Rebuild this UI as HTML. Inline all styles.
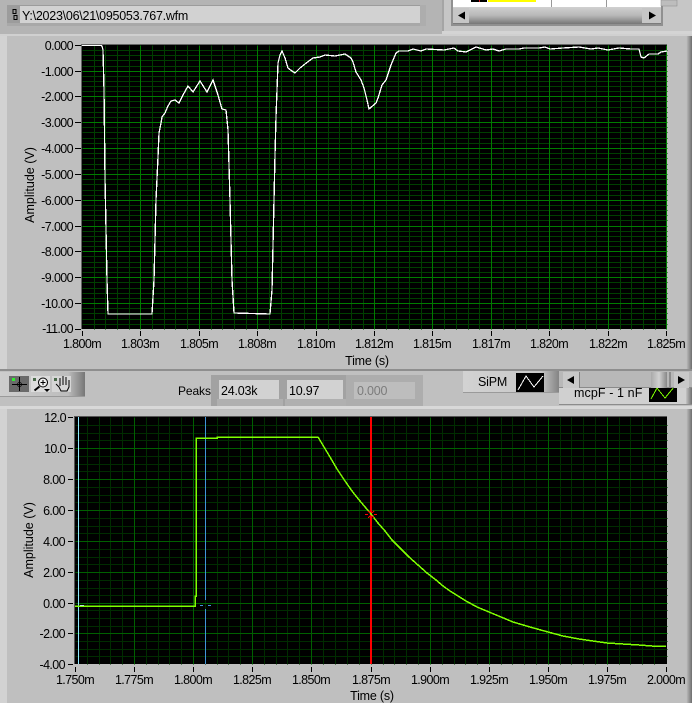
<!DOCTYPE html>
<html><head><meta charset="utf-8">
<style>
html,body{margin:0;padding:0;width:692px;height:703px;overflow:hidden;background:#bfbfbf}
svg{display:block;position:absolute;left:0;top:0}
text{font-family:"Liberation Sans",sans-serif;font-size:12.5px;letter-spacing:-.6px;fill:#000}
.r{text-anchor:end}.c{text-anchor:middle}
.ln{fill:none;shape-rendering:crispEdges}
</style></head><body>
<svg width="692" height="703" viewBox="0 0 692 703" xmlns="http://www.w3.org/2000/svg">
<defs>
<linearGradient id="gr" x1="0" x2="1" y1="0" y2="0"><stop offset="0" stop-color="#c4c4c4"/><stop offset="1" stop-color="#6e6e6e"/></linearGradient>
<linearGradient id="tb" x1="0" x2="1" y1="0" y2="0"><stop offset="0" stop-color="#cdcdcd"/><stop offset=".8" stop-color="#bdbdbd"/><stop offset="1" stop-color="#777"/></linearGradient>
<linearGradient id="sp" x1="0" x2="1" y1="0" y2="0"><stop offset="0" stop-color="#d2d2d2"/><stop offset=".8" stop-color="#c8c8c8"/><stop offset="1" stop-color="#808080"/></linearGradient>
<linearGradient id="th" x1="0" x2="0" y1="0" y2="1"><stop offset="0" stop-color="#d0d0d0"/><stop offset=".5" stop-color="#b8b8b8"/><stop offset="1" stop-color="#777"/></linearGradient>
<linearGradient id="th2" x1="0" x2="1" y1="0" y2="0"><stop offset="0" stop-color="#aaa"/><stop offset=".5" stop-color="#d0d0d0"/><stop offset="1" stop-color="#888"/></linearGradient>
</defs>

<!-- panel backgrounds -->
<rect width="692" height="703" fill="#bfbfbf"/>
<rect x="0" y="36" width="7" height="334" fill="#d2d2d2"/>
<rect x="0" y="409" width="7" height="294" fill="#d2d2d2"/>
<rect x="686" y="36" width="6" height="334" fill="url(#gr)"/>
<rect x="686" y="409" width="6" height="294" fill="url(#gr)"/>

<!-- top strip -->
<rect x="0" y="0" width="692" height="35" fill="#b4b4b4"/>
<rect x="0" y="34" width="692" height="2" fill="#d0d0d0"/>
<rect x="7" y="5" width="419" height="21" fill="#9c9c9c"/>
<rect x="20" y="6" width="400" height="17" fill="#d2d2d2"/>
<rect x="7" y="23" width="419" height="3" fill="#a8a8a8"/>
<rect x="420" y="5" width="6" height="21" fill="#adadad"/>
<rect x="13" y="9.500" width="3" height="4" fill="none" stroke="#000"/>
<rect x="14" y="15.500" width="3" height="4" fill="none" stroke="#000"/>
<text x="22" y="20" style="font-size:12.5px;letter-spacing:-.25px">Y:\2023\06\21\095053.767.wfm</text>

<!-- table at top right -->
<rect x="442" y="0" width="250" height="34" fill="#c6c6c6"/>
<rect x="442" y="0" width="2" height="34" fill="#a5a5a5"/>
<rect x="442" y="31" width="250" height="3" fill="#d4d4d4"/>
<rect x="451" y="0" width="212" height="26" fill="#909090"/>
<rect x="453" y="0" width="208" height="7" fill="#fff"/>
<rect x="471" y="0" width="16" height="2" fill="#000"/>
<rect x="479" y="0" width="1" height="2" fill="#d02020"/>
<rect x="488" y="0" width="48" height="2" fill="#ffff00"/>
<rect x="551" y="0" width="1" height="7" fill="#999"/>
<rect x="606" y="0" width="1" height="7" fill="#999"/>
<rect x="661" y="0" width="16" height="6" fill="#bdbdbd" stroke="#888" stroke-width=".5"/>
<rect x="453" y="7" width="208" height="17" fill="url(#th)"/>
<rect x="453" y="8" width="16" height="15" fill="#c6c6c6"/>
<rect x="642" y="8" width="19" height="15" fill="#c6c6c6"/>
<path d="M458 15.500l7-4v8z" fill="#000"/><path d="M656 15.500l-7-4v8z" fill="#000"/>

<!-- top plot -->
<rect x="81" y="44" width="586" height="285" fill="#000"/>
<path d="M81 44.500H667M81.500 44V329" stroke="#666" class="ln"/>
<g transform="translate(.5,.5)" class="ln">
<path stroke="#003f00" d="M94 45v284M105 45v284M117 45v284M129 45v284M152 45v284M164 45v284M175 45v284M187 45v284M211 45v284M222 45v284M234 45v284M246 45v284M269 45v284M281 45v284M293 45v284M304 45v284M328 45v284M339 45v284M351 45v284M363 45v284M386 45v284M398 45v284M409 45v284M421 45v284M444 45v284M456 45v284M468 45v284M479 45v284M503 45v284M515 45v284M526 45v284M538 45v284M561 45v284M573 45v284M585 45v284M596 45v284M620 45v284M631 45v284M643 45v284M655 45v284
M82 50h585M82 55h585M82 60h585M82 66h585M82 76h585M82 81h585M82 86h585M82 91h585M82 101h585M82 107h585M82 112h585M82 117h585M82 127h585M82 132h585M82 138h585M82 143h585M82 153h585M82 158h585M82 164h585M82 169h585M82 179h585M82 184h585M82 190h585M82 195h585M82 205h585M82 210h585M82 215h585M82 220h585M82 231h585M82 236h585M82 241h585M82 246h585M82 256h585M82 262h585M82 267h585M82 272h585M82 282h585M82 288h585M82 293h585M82 298h585M82 308h585M82 313h585M82 319h585M82 324h585"/>
<path stroke="#007c00" d="M140 45v284M199 45v284M257 45v284M316 45v284M374 45v284M432 45v284M491 45v284M549 45v284M608 45v284M666 45v284M82 71h585M82 96h585M82 122h585M82 148h585M82 174h585M82 200h585M82 226h585M82 251h585M82 277h585M82 303h585"/>
</g>
<polyline class="ln" stroke="#fff" stroke-width="1.3" points="82,45.500 101,45.500 102,46 103,50 104,90 105,178 107,280 108,314 152,314 154,280 156,200 158,157 159,133 161,123 162,117 165,113 168,106 171,101 175,100 179,103 183,95 188,86 193,92 200,81 207,92 213,80 218,95 222,109 226,110 228,130 229,165 230,200 232,280 234,313 270,314 272,290 274,200 275,155 276,117 277,90 278,63 280,55 282,51 285,58 288,68 292,71 295,73 300,68 305,64 313,58 320,57 325,55 335,56 345,54 351,58 353,62 356,72 361,80 364,88 367,100 369,109 376,103 378,98 382,85 386,80 391,65 396,53 399,51 408,51 413,49 421,51 426,49 444,50 454,48 458,51 466,52 476,47 486,50 493,49 499,51 506,49 519,49 524,48 539,48 545,47 550,49 563,48 579,47 591,49 598,48 608,50 619,48 631,49 639,49 641,57 644,58 649,54 658,54 661,52 667,51"/>

<!-- top plot ticks & labels -->
<path class="ln" stroke="#000" d="M75 45.500h6M75 71.500h6M75 96.500h6M75 122.500h6M75 148.500h6M75 174.500h6M75 200.500h6M75 226.500h6M75 251.500h6M75 277.500h6M75 303.500h6M75 329.500h6M82.500 331v5M140.500 331v5M199.500 331v5M257.500 331v5M316.500 331v5M374.500 331v5M432.500 331v5M491.500 331v5M549.500 331v5M608.500 331v5M666.500 331v5"/>
<g class="r">
<text x="73" y="50">0.000</text><text x="73" y="76">-1.000</text><text x="73" y="101">-2.000</text><text x="73" y="127">-3.000</text><text x="73" y="153">-4.000</text><text x="73" y="179">-5.000</text><text x="73" y="205">-6.000</text><text x="73" y="231">-7.000</text><text x="73" y="256">-8.000</text><text x="73" y="282">-9.000</text><text x="73" y="308">-10.00</text><text x="73" y="333">-11.00</text>
</g>
<g class="c">
<text x="82" y="348">1.800m</text><text x="140" y="348">1.803m</text><text x="199" y="348">1.805m</text><text x="257" y="348">1.808m</text><text x="316" y="348">1.810m</text><text x="374" y="348">1.812m</text><text x="432" y="348">1.815m</text><text x="491" y="348">1.817m</text><text x="549" y="348">1.820m</text><text x="608" y="348">1.822m</text><text x="666" y="348">1.825m</text>
<text x="367" y="365" style="letter-spacing:-.2px">Time (s)</text>
<text transform="translate(34,185) rotate(-90)" style="letter-spacing:0">Amplitude (V)</text>
</g>

<!-- middle bar -->
<rect x="0" y="369" width="692" height="2" fill="#8e8e8e"/>
<rect x="0" y="371" width="692" height="35" fill="#c0c0c0"/>
<rect x="0" y="406" width="692" height="3" fill="#d8d8d8"/>
<rect x="0" y="372" width="85" height="24" fill="url(#tb)"/>
<rect x="0" y="396" width="85" height="1" fill="#9a9a9a"/>
<!-- tool buttons -->
<rect x="9" y="376" width="20" height="16" fill="#6a6a6a"/>
<path class="ln" stroke="#000" d="M12 384.500h15M19.500 377v14"/>
<rect x="12" y="378" width="3" height="3" fill="#30f030"/>
<circle cx="19.500" cy="384.500" r="2" fill="none" stroke="#000" stroke-width=".8"/>
<rect x="31" y="376" width="19" height="16" fill="#dcdcdc"/>
<rect x="33" y="378" width="3" height="3" fill="#4a6a4a"/>
<circle cx="43" cy="382.500" r="4.500" fill="#f0f0f0" stroke="#000"/>
<path d="M40.500 382.500h5M43 380v5" stroke="#000" stroke-width="1"/>
<path d="M39.500 386.500l-5 4" stroke="#000" stroke-width="2"/>
<path d="M44 389h6l-3 3z" fill="#000"/>
<rect x="52" y="376" width="19" height="16" fill="#d6d6d6"/>
<rect x="54" y="378" width="3" height="3" fill="#4a6a4a"/>
<path fill="none" stroke="#000" stroke-width="1" d="M56 384l3 3 2 4h6l2-4v-7M60 386v-8M63 385v-9M66 385v-8M69 385v-5"/>

<text x="178" y="395" style="letter-spacing:-.1px;font-size:12px">Peaks</text>
<rect x="211" y="375" width="74" height="31" fill="#a2a2a2"/>
<rect x="284" y="375" width="68" height="31" fill="#a2a2a2"/>
<rect x="217" y="399" width="66" height="7" fill="#b0b0b0"/>
<rect x="285" y="399" width="65" height="7" fill="#b0b0b0"/>
<rect x="219" y="380" width="60" height="19" fill="#d2d2d2"/>
<rect x="287" y="380" width="56" height="19" fill="#d2d2d2"/>
<text x="221" y="395" style="letter-spacing:-.2px">24.03k</text>
<text x="289" y="395" style="letter-spacing:-.2px">10.97</text>
<rect x="346" y="375" width="77" height="31" fill="#adadad"/>
<rect x="354" y="382" width="61" height="17" fill="#bdbdbd"/>
<text x="357" y="395" style="fill:#7c7c7c;letter-spacing:-.2px">0.000</text>

<!-- SiPM legend -->
<rect x="463" y="371" width="97" height="22" fill="url(#sp)"/>
<rect x="463" y="392" width="97" height="1" fill="#9a9a9a"/>
<text x="478" y="386" style="letter-spacing:-.2px">SiPM</text>
<rect x="516" y="373" width="28" height="19" fill="#000"/>
<polyline points="518,390 526,376 534,387 543,376" fill="none" stroke="#fff" class="ln"/>

<!-- mcpF row -->
<rect x="559" y="388" width="133" height="17" fill="#d0d0d0"/>
<rect x="686" y="388" width="6" height="17" fill="url(#gr)"/>
<rect x="559" y="404" width="133" height="1" fill="#8c8c8c"/>
<text x="574" y="397" style="letter-spacing:.1px">mcpF - 1 nF</text>
<rect x="649" y="387" width="28" height="15" fill="#000"/>
<polyline points="651,399 657,388 665,398 674,387" fill="none" stroke="#7fff00" class="ln"/>

<!-- legend scrollbar -->
<rect x="559" y="371" width="133" height="17" fill="#b8b8b8"/>
<rect x="559" y="387" width="133" height="1" fill="#8a8a8a"/>
<rect x="563" y="372" width="16" height="16" fill="#c8c8c8"/>
<rect x="674" y="372" width="15" height="16" fill="#c8c8c8"/>
<rect x="579" y="372" width="1" height="16" fill="#808080"/>
<path d="M567 380l7-4v8z" fill="#000"/><path d="M685 380l-7-4v8z" fill="#000"/>
<rect x="651" y="372" width="16" height="16" fill="url(#th2)"/>
<rect x="669" y="372" width="2" height="16" fill="#8c8c8c"/>

<!-- bottom plot -->
<rect x="74" y="416" width="593" height="248" fill="#000"/>
<path d="M74 416.500H667M74.500 416V664" stroke="#555" class="ln"/>
<g transform="translate(.5,.5)" class="ln">
<path stroke="#002c00" d="M87 417v247M99 417v247M110 417v247M122 417v247M146 417v247M158 417v247M169 417v247M181 417v247M205 417v247M217 417v247M228 417v247M240 417v247M264 417v247M276 417v247M287 417v247M299 417v247M323 417v247M335 417v247M347 417v247M359 417v247M383 417v247M394 417v247M406 417v247M418 417v247M442 417v247M454 417v247M465 417v247M477 417v247M501 417v247M512 417v247M524 417v247M536 417v247M560 417v247M571 417v247M583 417v247M595 417v247M619 417v247M630 417v247M642 417v247M654 417v247
M75 425h592M75 433h592M75 440h592M75 456h592M75 464h592M75 471h592M75 487h592M75 495h592M75 502h592M75 518h592M75 526h592M75 533h592M75 549h592M75 557h592M75 564h592M75 580h592M75 588h592M75 595h592M75 610h592M75 618h592M75 626h592M75 641h592M75 649h592M75 656h592"/>
<path stroke="#006000" d="M134 417v247M193 417v247M252 417v247M311 417v247M371 417v247M430 417v247M489 417v247M548 417v247M607 417v247M75 448h592M75 479h592M75 510h592M75 541h592M75 572h592M75 603h592M75 633h592"/>
</g>
<!-- cursors -->
<rect x="78" y="417" width="1" height="247" fill="#90e8ff"/>
<path class="ln" stroke="#3f94d8" d="M205.500 417V600M205.500 609V664M200 605.500h3M208 605.500h3"/>
<rect x="370" y="417" width="2" height="247" fill="#ff0000"/>
<polyline class="ln" stroke="#7fff00" stroke-width="1.5" points="75,606 195,606 195,596 196,596 196,438 217,438 217,437 318,437 324,447 330,457 337,469 345,481 352,491 360,501 371,514 378,523 385,531 392,540 400,548 409,557 418,565 427,573 436,580 443,586 450,591 458,596 466,601 477,607 489,612 501,617 513,622 530,627 548,632 563,636 579,639 593,641 607,643 623,644 639,645 652,646 666,646"/>
<path class="ln" stroke="#ff0000" d="M365 514.500h3M374 514.500h3M371 509v3M371 517v3M368 511l2 2M374 511l-2 2M368 518l2-2M374 518l-2-2"/>
<rect x="80" y="605" width="4" height="1" fill="#b0e8d0"/>

<!-- bottom ticks & labels -->
<path class="ln" stroke="#000" d="M68 417.500h5M68 448.500h5M68 479.500h5M68 510.500h5M68 541.500h5M68 572.500h5M68 603.500h5M68 633.500h5M68 664.500h5M75.500 667v5M134.500 667v5M193.500 667v5M252.500 667v5M311.500 667v5M371.500 667v5M430.500 667v5M489.500 667v5M548.500 667v5M607.500 667v5M666.500 667v5"/>
<g class="r">
<text x="66" y="422">12.0</text><text x="66" y="453">10.0</text><text x="65" y="484">8.00</text><text x="65" y="515">6.00</text><text x="65" y="546">4.00</text><text x="65" y="577">2.00</text><text x="65" y="608">0.00</text><text x="65" y="638">-2.00</text><text x="65" y="669">-4.00</text>
</g>
<g class="c">
<text x="75" y="684">1.750m</text><text x="134" y="684">1.775m</text><text x="193" y="684">1.800m</text><text x="252" y="684">1.825m</text><text x="311" y="684">1.850m</text><text x="371" y="684">1.875m</text><text x="430" y="684">1.900m</text><text x="489" y="684">1.925m</text><text x="548" y="684">1.950m</text><text x="607" y="684">1.975m</text><text x="666" y="684">2.000m</text>
<text x="372" y="700" style="letter-spacing:-.2px">Time (s)</text>
<text transform="translate(33,540) rotate(-90)" style="letter-spacing:0">Amplitude (V)</text>
</g>
</svg>
</body></html>
